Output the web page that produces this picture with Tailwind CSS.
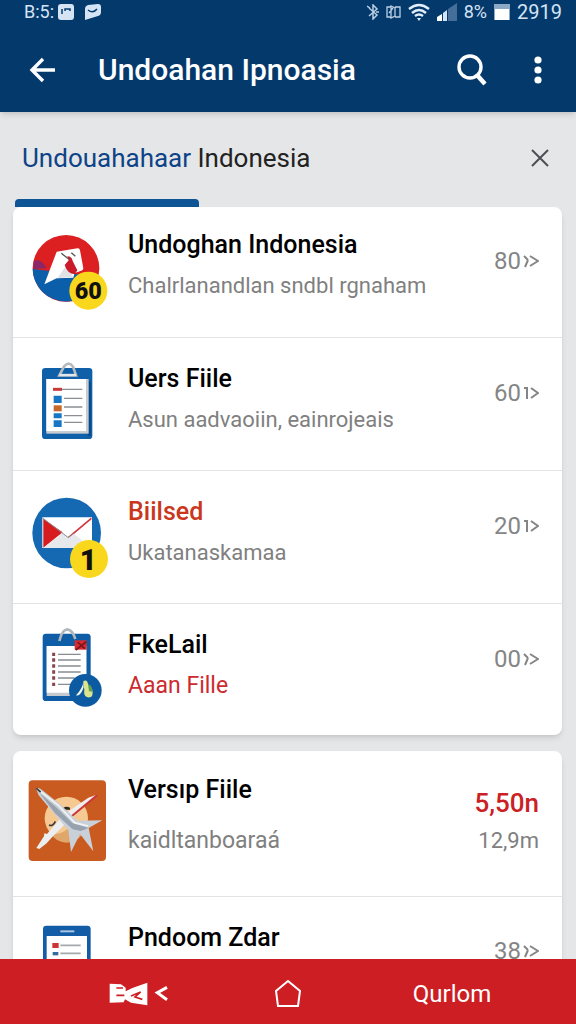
<!DOCTYPE html>
<html lang="id">
<head>
    <meta charset="UTF-8">
    <meta name="viewport" content="width=device-width, initial-scale=1.0">
    <title>Undoghan Indonesia</title>
    <script src="https://cdn.jsdelivr.net/npm/@tailwindcss/browser@4"></script>
</head>
<body class="flex h-screen flex-col overflow-hidden bg-[#e5e6e7] font-['Roboto','Noto_Sans',sans-serif] text-black">

    <!-- Header -->
    <header class="z-10 shrink-0 bg-[#04396c] text-white shadow-md">
        <div class="flex h-6 items-center justify-between pl-6 pr-[14px] text-[18px] leading-6 text-[#d5e4f5]">
            <div class="flex items-center">
                <span>B:5:</span>
                <svg class="ml-1 h-4 w-4" viewBox="0 0 16 16"><rect width="16" height="16" rx="3" fill="#d5e4f5"/><path d="M4 10V5M7 7V5h5v2" stroke="#04396c" stroke-width="1.5" fill="none"/></svg>
                <svg class="ml-2.5 h-[18px] w-[17px]" viewBox="0 0 17 18"><path d="M1 6Q1 3 4 2L14 1Q17 1 17 4V9Q17 12 14 13L1 17Z" fill="#d5e4f5"/><path d="M4 7Q9 11 13 6" stroke="#04396c" stroke-width="1.5" fill="none"/></svg>
            </div>
            <div class="flex items-center gap-[7px]">
                <svg class="h-4 w-3" viewBox="0 0 12 16" fill="none" stroke="#b9cee4" stroke-width="1.5"><path d="M2 4l8 7-4 4V1l4 4-8 7M0 2l3 2M9 8h3"/></svg>
                <svg class="h-[14px] w-[15px]" viewBox="0 0 15 14" fill="none" stroke="#b9cee4" stroke-width="1.3"><path d="M1 2h4v10H1zM5 1l4 2v8l-4 2zM9 2h5v10H9M3 8l4-5"/></svg>
                <svg class="h-[18px] w-[22px]" viewBox="0 0 22 18" fill="none" stroke="#e3eefa" stroke-width="2.4"><path d="M1 6Q11-2 21 6M4 10Q11 4 18 10M7 13Q11 10 15 13"/><path d="M9 15h4l-2 3z" fill="#e3eefa" stroke="none"/></svg>
                <svg class="h-[18px] w-5" viewBox="0 0 20 18"><path d="M0 18V14L5 11V18Z" fill="#fff"/><path d="M6 18V10L10 7V18Z" fill="#d5e4f5"/><path d="M11 18V6L20 0V18Z" fill="#456f99"/></svg>
                <span>8%</span>
                <svg class="h-[18px] w-4" viewBox="0 0 16 18"><path d="M0 1h16v16H0z" fill="#8ba8c4"/><path d="M1 6h14v11H1z" fill="#fff"/></svg>
                <span class="text-[20px]">2919</span>
            </div>
        </div>
        <div class="flex h-[88px] items-center pl-[26px] pr-[22px] pt-1">
            <button type="button" aria-label="Kembali" class="flex w-8 justify-center">
                <svg class="h-7 w-7" viewBox="0 0 28 28" fill="none" stroke="#fff" stroke-width="3.4"><path d="M15 3L4 14l11 11M4 14h23"/></svg>
            </button>
            <h1 class="ml-10 flex-1 text-[30px] font-medium leading-9">Undoahan Ipnoasia</h1>
            <button type="button" aria-label="Cari">
                <svg class="h-8 w-8" viewBox="0 0 32 32" fill="none" stroke="#fff"><circle cx="14" cy="13" r="11" stroke-width="3.4"/><path d="M21 21l8 9" stroke-width="4.4"/></svg>
            </button>
            <button type="button" aria-label="Menu" class="ml-[34px]">
                <svg class="h-7 w-8" viewBox="0 0 32 28" fill="#fff"><circle cx="16" cy="4" r="3.6"/><circle cx="16" cy="14" r="3.6"/><circle cx="16" cy="24" r="3.6"/></svg>
            </button>
        </div>
    </header>

    <main class="min-h-0 flex-1 overflow-hidden pl-[13px] pr-[14px]">
        <!-- Tab heading -->
        <div class="flex h-[87px] items-center justify-between pl-[9px] pr-[13px] pt-[5px]">
            <h2 class="text-[26px] leading-8 text-[#222]"><span class="text-[#0f4387]">Undouahahaar</span> Indonesia</h2>
            <button type="button" aria-label="Tutup">
                <svg class="h-[18px] w-[18px]" viewBox="0 0 18 18" stroke="#4b4f54" stroke-width="2"><path d="M1 1l16 16M17 1L1 17"/></svg>
            </button>
        </div>
        <div class="ml-0.5 h-2 w-[184px] rounded-t bg-[#0e5595]"></div>

        <ul class="rounded-lg bg-white shadow-md">
            <li class="flex gap-4 border-b border-[#e1e3e4] px-[15px] pb-6 pt-[22px]">
                <svg class="h-[84px] w-[84px] shrink-0 overflow-visible" viewBox="24 12 252 252">
                    <circle cx="138" cy="130" r="100" fill="#dc1f20"/>
                    <path d="M38 132L90 138 190 150 200 208A100 100 0 0 1 38 132Z" fill="#0b5ea9"/>
                    <path d="M42 108Q62 98 80 130L40 132Z" fill="#8b2668"/>
                    <path d="M110 80L172 70Q178 68 180 76L190 130Q190 136 184 137L164 144 160 158 110 160 73 178Z" fill="#fff"/>
                    <path d="M138 122L112 160 160 156Z" fill="#e0e3e6"/>
                    <path d="M142 94Q156 94 158 108L172 136 164 148Q142 146 134 120L146 106Z" fill="#c91c28"/>
                    <path d="M124 85L147 103M154 83L166 94" stroke="#555" stroke-width="4"/>
                    <circle cx="205" cy="197" r="57" fill="#f9d71c"/>
                    <text x="205" y="222" text-anchor="middle" font-family="Roboto, sans-serif" font-weight="900" font-size="70" fill="#111">60</text>
                </svg>
                <div class="min-w-0 flex-1">
                    <h3 class="text-[25px] font-medium leading-8">Undoghan Indonesia</h3>
                    <p class="mt-[11px] whitespace-nowrap text-[22px] leading-7 text-[#808080]">Chalrlanandlan sndbl rgnaham</p>
                </div>
                <a href="#" class="mr-2 mt-[18px] flex h-7 items-center gap-0.5 text-[24px] leading-7 text-[#858585]">80<svg class="h-4 w-4" viewBox="0 0 16 16" fill="none" stroke="#858585" stroke-width="2"><path d="M1 3l4 4M5 7l-3 7M7 3l8 5-8 5"/></svg></a>
            </li>
            <li class="flex gap-4 border-b border-[#e1e3e4] px-[15px] pb-[23px] pt-[25px]">
                <svg class="h-[84px] w-[84px] shrink-0 overflow-visible" viewBox="24 39 252 252">
                    <rect x="66" y="54" width="151" height="213" rx="10" fill="#0f60a9"/>
                    <path d="M205 90l8 8v160h-10z" fill="#0b4a89"/>
                    <rect x="79" y="87" width="127" height="164" fill="#c8cdd2"/>
                    <rect x="79" y="87" width="119" height="156" fill="#fff"/>
                    <path d="M118 76L132 50Q146 32 159 50L168 76Z" fill="none" stroke="#b5babe" stroke-width="8"/>
                    <path d="M118 75h50" stroke="#e4e7e9" stroke-width="7"/>
                    <path d="M126 118h61M132 145h55M132 171h55M132 197h55M132 217h55" stroke="#8b8f93" stroke-width="4"/>
                    <path d="M99 118h27" stroke="#c7393b" stroke-width="9"/>
                    <path d="M101 137h24v22h-24zM101 190h24v15h-24zM101 211h24v20h-24z" fill="#1976c4"/>
                    <path d="M101 166h24v18h-24z" fill="#c8672b"/>
                </svg>
                <div class="min-w-0 flex-1">
                    <h3 class="text-[25px] font-medium leading-8">Uers Fiile</h3>
                    <p class="mt-[11px] whitespace-nowrap text-[22px] leading-7 text-[#808080]">Asun aadvaoiin, eainrojeais</p>
                </div>
                <a href="#" class="mr-2 mt-4 flex h-7 items-center gap-0.5 text-[24px] leading-7 text-[#858585]">60<svg class="h-4 w-4" viewBox="0 0 16 16" fill="none" stroke="#858585" stroke-width="2"><path d="M1 3h3v11M8 3l7 5-7 5"/></svg></a>
            </li>
            <li class="flex gap-4 border-b border-[#e1e3e4] px-[15px] pb-[23px] pt-[25px]">
                <svg class="h-[84px] w-[84px] shrink-0 overflow-visible" viewBox="24 33 252 252">
                    <ellipse cx="140" cy="144" rx="103" ry="106" fill="#1569b3"/>
                    <path d="M67 97h149v92H67z" fill="#fff"/>
                    <path d="M70 101L128 142 70 188Z" fill="#d71c20"/>
                    <path d="M214 100L145 158" stroke="#d3333a" stroke-width="5"/>
                    <path d="M70 189L128 143 145 158 162 146 214 189Z" fill="#e6e8eb"/>
                    <path d="M68 99L145 158 160 146" fill="none" stroke="#8c9096" stroke-width="3"/>
                    <circle cx="207" cy="222" r="57" fill="#f9d71c"/>
                    <text x="205" y="255" text-anchor="middle" font-family="Roboto, sans-serif" font-weight="900" font-size="88" fill="#111">1</text>
                </svg>
                <div class="min-w-0 flex-1">
                    <h3 class="text-[25px] font-medium leading-8 text-[#c9381c]">Biilsed</h3>
                    <p class="mt-[11px] whitespace-nowrap text-[22px] leading-7 text-[#808080]">Ukatanaskamaa</p>
                </div>
                <a href="#" class="mr-2 mt-4 flex h-7 items-center gap-0.5 text-[24px] leading-7 text-[#858585]">20<svg class="h-4 w-4" viewBox="0 0 16 16" fill="none" stroke="#858585" stroke-width="2"><path d="M1 3h3v11M8 3l7 5-7 5"/></svg></a>
            </li>
            <li class="flex gap-4 px-[15px] pb-[22px] pt-[25px]">
                <svg class="h-[84px] w-[84px] shrink-0 overflow-visible" viewBox="24 42 252 252">
                    <rect x="68" y="56" width="144" height="202" rx="10" fill="#0f5da6"/>
                    <path d="M80 93h119v150H80z" fill="#c5cacf"/>
                    <path d="M80 93h119v140H80z" fill="#fff"/>
                    <path d="M118 78Q126 44 142 43 158 45 166 72" fill="none" stroke="#b2b7bb" stroke-width="8"/>
                    <path d="M164 76h36v28h-36z" fill="#d92a30"/>
                    <path d="M167 105L199 80M173 81L194 101" stroke="#79151b" stroke-width="5"/>
                    <path d="M114 118h68M114 135h68M114 153h68M114 171h68M114 189h50M114 208h40" stroke="#898d91" stroke-width="4"/>
                    <path d="M101 113v10M101 130v10M101 148v10M101 166v10M101 184v10M101 203v10" stroke="#87464d" stroke-width="9"/>
                    <circle cx="196" cy="226" r="49" fill="#0c5aa2"/>
                    <path d="M190 198Q202 192 204 207L217 225Q222 249 203 247 190 245 193 226Z" fill="#dce58e"/>
                    <path d="M190 199Q189 219 168 241 182 245 191 217Z" fill="#f2f6e5"/>
                    <path d="M204 207Q218 213 217 230L207 229Z" fill="#5d9f54"/>
                </svg>
                <div class="min-w-0 flex-1">
                    <h3 class="text-[25px] font-medium leading-8">FkeLail</h3>
                    <p class="mt-[11px] whitespace-nowrap text-[23px] leading-7 text-[#cc2a2e]">Aaan Fille</p>
                </div>
                <a href="#" class="mr-2 mt-4 flex h-7 items-center gap-0.5 text-[24px] leading-7 text-[#858585]">00<svg class="h-4 w-4" viewBox="0 0 16 16" fill="none" stroke="#858585" stroke-width="2"><path d="M1 3l4 4M5 7l-3 7M7 3l8 5-8 5"/></svg></a>
            </li>
        </ul>

        <ul class="mt-4 rounded-lg bg-white shadow-md">
            <li class="flex gap-4 border-b border-[#e1e3e4] px-[15px] pb-[38px] pt-[23px]">
                <svg class="h-[84px] w-[84px] shrink-0 overflow-visible" viewBox="24 12 252 252">
                    <rect x="26" y="31" width="232" height="242" rx="12" fill="#c95b20"/>
                    <circle cx="139" cy="145" r="65" fill="#f5c991"/>
                    <path d="M92 190Q130 200 158 158L198 165Q186 216 139 218 106 216 92 190Z" fill="#dfa86a"/>
                    <path d="M130 113Q140 107 150 113v6h-19z" fill="#292624"/>
                    <path d="M230 74L170 130 150 148 96 202 80 220 58 237 49 234 72 199 73 190 81 192 130 135 205 83Z" fill="#eceef0"/>
                    <path d="M231 76L155 139" stroke="#cf3439" stroke-width="6"/>
                    <path d="M48 56Q57 50 69 62L120 103 173 152 247 151 206 174 220 244 180 192 153 246 145 180 101 130 56 76Z" fill="#c9d0d9"/>
                    <path d="M58 68L108 111 158 160 206 174 182 183 158 178 105 130Z" fill="#98a2ae"/>
                    <path d="M54 58L114 105 164 158 204 168" fill="none" stroke="#f2f4f6" stroke-width="5"/>
                    <path d="M49 55l13 11M87 165q12 6 19-11" fill="none" stroke="#3d3b3c" stroke-width="5"/>
                </svg>
                <div class="min-w-0 flex-1">
                    <h3 class="text-[25px] font-medium leading-8">Versıp Fiile</h3>
                    <p class="mt-[21px] whitespace-nowrap text-[23px] leading-7 text-[#808080]">kaidltanboaraá</p>
                </div>
                <div class="mr-2 mt-[13px] text-right">
                    <p class="text-[26px] font-medium leading-8 text-[#cc2024]">5,50n</p>
                    <p class="mt-2 text-[22px] leading-7 text-[#808080]">12,9m</p>
                </div>
            </li>
            <li class="flex gap-4 px-[15px] pb-[23px] pt-[25px]">
                <svg class="h-[84px] w-[84px] shrink-0 overflow-visible" viewBox="24 66 252 252">
                    <rect x="69" y="77" width="143" height="200" rx="10" fill="#125da6"/>
                    <path d="M80 108h121v150H80z" fill="#fff"/>
                    <path d="M121 94h42" stroke="#a9c6e1" stroke-width="6"/>
                    <path d="M97 129h19v15H97z" fill="#cf3434"/>
                    <path d="M98 156h17v10H98z" fill="#356d9e"/>
                    <path d="M121 136h61M121 160h61" stroke="#a5a8ab" stroke-width="5"/>
                </svg>
                <div class="min-w-0 flex-1">
                    <h3 class="text-[25px] font-medium leading-8">Pndoom Zdar</h3>
                </div>
                <a href="#" class="mr-2 mt-[15px] flex h-7 items-center gap-0.5 text-[24px] leading-7 text-[#858585]">38<svg class="h-4 w-4" viewBox="0 0 16 16" fill="none" stroke="#858585" stroke-width="2"><path d="M1 3l4 4M5 7l-3 7M7 3l8 5-8 5"/></svg></a>
            </li>
        </ul>
    </main>

    <!-- Bottom navigation -->
    <nav class="z-10 grid h-[65px] shrink-0 grid-cols-3 items-center bg-[#cd1e23] px-[42px] pt-1 text-white">
        <button type="button" aria-label="Terbaru" class="flex justify-center pl-[30px]">
            <svg class="h-6 w-[60px]" viewBox="0 0 180 72">
                <path d="M2 5L36 7 50 17 50 28 70 18 115 2V70L66 62 48 52 44 61 2 62Z" fill="#fff"/>
                <path d="M22 18h20M22 40h24M66 42l29-12-17 15 22 7" fill="none" stroke="#cd1e23" stroke-width="5"/>
                <path d="M174 16L145 32 174 53" fill="none" stroke="#fff" stroke-width="9"/>
            </svg>
        </button>
        <button type="button" aria-label="Beranda" class="flex justify-center">
            <svg class="h-7 w-[26px]" viewBox="0 0 26 28" fill="none" stroke="#fff" stroke-width="2"><path d="M13 1L1 11l2 15h20l2-15z"/></svg>
        </button>
        <button type="button" class="text-center text-[24px] leading-7">Qurlom</button>
    </nav>
</body>
</html>
